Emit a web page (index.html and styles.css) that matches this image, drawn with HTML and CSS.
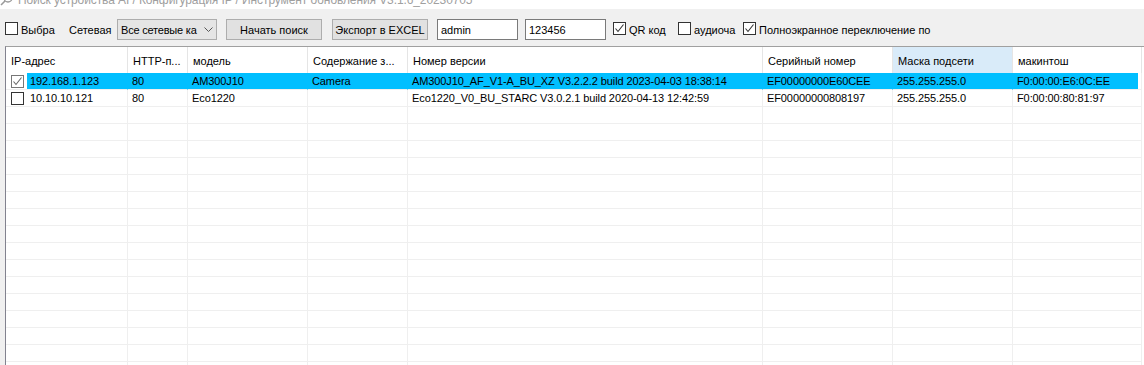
FILE: index.html
```html
<!DOCTYPE html>
<html lang="ru">
<head>
    <meta charset="UTF-8">
    <title>Поиск устройства</title>
    <link rel="stylesheet" href="styles.css">
</head>
<body>
<div class="title">
    <div class="title-in">
        <svg class="title-icon" width="14" height="14" viewBox="0 0 14 14"><circle cx="8" cy="5" r="4" fill="none" stroke="#9a9a9a" stroke-width="1.3"/><line x1="5" y1="8" x2="1" y2="12" stroke="#9a9a9a" stroke-width="1.6"/></svg>
        <span>Поиск устройства AI / Конфигурация IP / Инструмент обновления V3.1.6_20230705</span>
    </div>
</div>

<div class="toolbar">
    <span class="cb first"></span><span class="lbl w-all">Выбра</span>
    <span class="lbl w-net">Сетевая</span>
    <div class="combo"><span>Все сетевые ка</span><svg width="9" height="5" viewBox="0 0 9 5"><polyline points="0.5,0.5 4.5,4.5 8.5,0.5" fill="none" stroke="#555" stroke-width="1"/></svg></div>
    <button class="btn">Начать поиск</button>
    <button class="btn">Экспорт в EXCEL</button>
    <input class="inp user" type="text" value="admin">
    <input class="inp pass" type="text" value="123456">
    <span class="cb checked"><svg width="11" height="11" viewBox="0 0 11 11"><polyline points="1.5,5.5 4,8.5 9.5,1.5" fill="none" stroke="#333" stroke-width="1.1"/></svg></span><span class="lbl w-qr">QR код</span>
    <span class="cb"></span><span class="lbl w-audio">аудиоча</span>
    <span class="cb checked"><svg width="11" height="11" viewBox="0 0 11 11"><polyline points="1.5,5.5 4,8.5 9.5,1.5" fill="none" stroke="#333" stroke-width="1.1"/></svg></span><span class="lbl w-full">Полноэкранное переключение по</span>
</div>

<div class="grid">
    <div class="row head">
        <div class="c first-col">IP-адрес</div>
        <div class="c">HTTP-п...</div>
        <div class="c">модель</div>
        <div class="c">Содержание з...</div>
        <div class="c">Номер версии</div>
        <div class="c">Серийный номер</div>
        <div class="c hover">Маска подсети</div>
        <div class="c">макинтош</div>
    </div>
    <div class="row sel">
        <div class="c first-col"><span class="rcb on"><svg width="11" height="11" viewBox="0 0 11 11"><polyline points="1.5,5.5 4,8.5 9.5,1.5" fill="none" stroke="#666" stroke-width="1.1"/></svg></span>192.168.1.123</div>
        <div class="c">80</div>
        <div class="c">AM300J10</div>
        <div class="c">Camera</div>
        <div class="c">AM300J10_AF_V1-A_BU_XZ V3.2.2.2 build 2023-04-03 18:38:14</div>
        <div class="c">EF00000000E60CEE</div>
        <div class="c">255.255.255.0</div>
        <div class="c last">F0:00:00:E6:0C:EE</div>
    </div>
    <div class="row">
        <div class="c first-col"><span class="rcb"></span>10.10.10.121</div>
        <div class="c">80</div>
        <div class="c">Eco1220</div>
        <div class="c"></div>
        <div class="c">Eco1220_V0_BU_STARC V3.0.2.1 build 2020-04-13 12:42:59</div>
        <div class="c">EF00000000808197</div>
        <div class="c">255.255.255.0</div>
        <div class="c">F0:00:00:80:81:97</div>
    </div>
    <div class="row"><i></i><i></i><i></i><i></i><i></i><i></i><i></i><i></i></div>
    <div class="row"><i></i><i></i><i></i><i></i><i></i><i></i><i></i><i></i></div>
    <div class="row"><i></i><i></i><i></i><i></i><i></i><i></i><i></i><i></i></div>
    <div class="row"><i></i><i></i><i></i><i></i><i></i><i></i><i></i><i></i></div>
    <div class="row"><i></i><i></i><i></i><i></i><i></i><i></i><i></i><i></i></div>
    <div class="row"><i></i><i></i><i></i><i></i><i></i><i></i><i></i><i></i></div>
    <div class="row"><i></i><i></i><i></i><i></i><i></i><i></i><i></i><i></i></div>
    <div class="row"><i></i><i></i><i></i><i></i><i></i><i></i><i></i><i></i></div>
    <div class="row"><i></i><i></i><i></i><i></i><i></i><i></i><i></i><i></i></div>
    <div class="row"><i></i><i></i><i></i><i></i><i></i><i></i><i></i><i></i></div>
    <div class="row"><i></i><i></i><i></i><i></i><i></i><i></i><i></i><i></i></div>
    <div class="row"><i></i><i></i><i></i><i></i><i></i><i></i><i></i><i></i></div>
    <div class="row"><i></i><i></i><i></i><i></i><i></i><i></i><i></i><i></i></div>
    <div class="row"><i></i><i></i><i></i><i></i><i></i><i></i><i></i><i></i></div>
    <div class="row"><i></i><i></i><i></i><i></i><i></i><i></i><i></i><i></i></div>
    <div class="row"><i></i><i></i><i></i><i></i><i></i><i></i><i></i><i></i></div>
</div>
</body>
</html>
```

FILE: styles.css
```css
body { margin: 0; background: #f0f0f0; font-family: "Liberation Sans", Arial, sans-serif; font-size: 11px; color: #000; overflow: hidden; height: 365px; }

/* window title, mostly cut off */
.title { height: 9px; overflow: hidden; background: #fff; }
.title-in { display: flex; align-items: center; gap: 4px; margin-top: -8px; height: 16px; color: #a0a0a0; font-size: 12px; letter-spacing: -0.1px; white-space: nowrap; }
.title-icon { flex: none; }

/* toolbar */
.toolbar { display: flex; align-items: center; height: 37px; box-sizing: border-box; padding: 10px 0 6px 5px; white-space: nowrap; }
.cb { flex: none; width: 13px; height: 13px; box-sizing: border-box; border: 1px solid #333; background: #fff; display: flex; align-items: center; justify-content: center; margin-bottom: 2px; }
.lbl { flex: none; overflow: hidden; box-sizing: border-box; padding-left: 3px; }
.w-all { width: 48px; }
.w-net { width: 51px; }
.w-qr { width: 52px; }
.w-audio { width: 47px; margin-right: 5px; }
.w-full { width: 190px; }
.combo { flex: none; width: 100px; height: 21px; box-sizing: border-box; border: 1px solid #adadad; background: #e5e5e5; display: flex; align-items: center; justify-content: space-between; padding: 0 3px 0 3px; margin-right: 9px; letter-spacing: -0.2px; }
.btn { flex: none; width: 96px; height: 21px; border: 1px solid #adadad; background: #e1e1e1; font: inherit; color: #000; padding: 0; margin-right: 10px; }
.btn + .btn { margin-right: 9px; }
.inp { flex: none; width: 81px; height: 21px; box-sizing: border-box; border: 1px solid #7a7a7a; background: #fff; font: inherit; padding: 0 3px; margin: 0 7px 0 0; outline: none; }

/* device table */
.grid { margin-left: 5px; border-left: 1px solid #82828f; border-top: 1px solid #a0a0a0; background: #fff; height: 320px; }
.row { display: grid; grid-template-columns: 122px 60px 120px 100px 355px 130px 120px 129px; height: 17px; }
.row > .c, .row > i { box-sizing: border-box; border-right: 1px solid #efefef; border-bottom: 1px solid #efefef; padding-left: 4px; line-height: 16px; white-space: nowrap; overflow: hidden; display: flex; align-items: center; letter-spacing: -0.1px; }
.head { height: 26px; }
.head > .c { border-bottom: none; border-right-color: #e5e5e5; padding-left: 5px; padding-top: 2px; letter-spacing: 0; }
.head > .first-col { padding-left: 7px; }
.head > .hover { background: #d9ebf9; }
.row > .first-col { padding-left: 5px; }
.sel > .c { background: #00bfff; border-right-color: #00bfff; }
.sel > .first-col { background: linear-gradient(to right, #fff 21px, #00bfff 21px); }
.sel > .last { background: linear-gradient(to right, #00bfff calc(100% - 3px), #fff 0); border-right-color: #efefef; }
.rcb { flex: none; width: 13px; height: 13px; box-sizing: border-box; border: 1px solid #333; background: #fff; margin-right: 6px; display: flex; align-items: center; justify-content: center; }
.rcb.on { border-color: #777; }
```
